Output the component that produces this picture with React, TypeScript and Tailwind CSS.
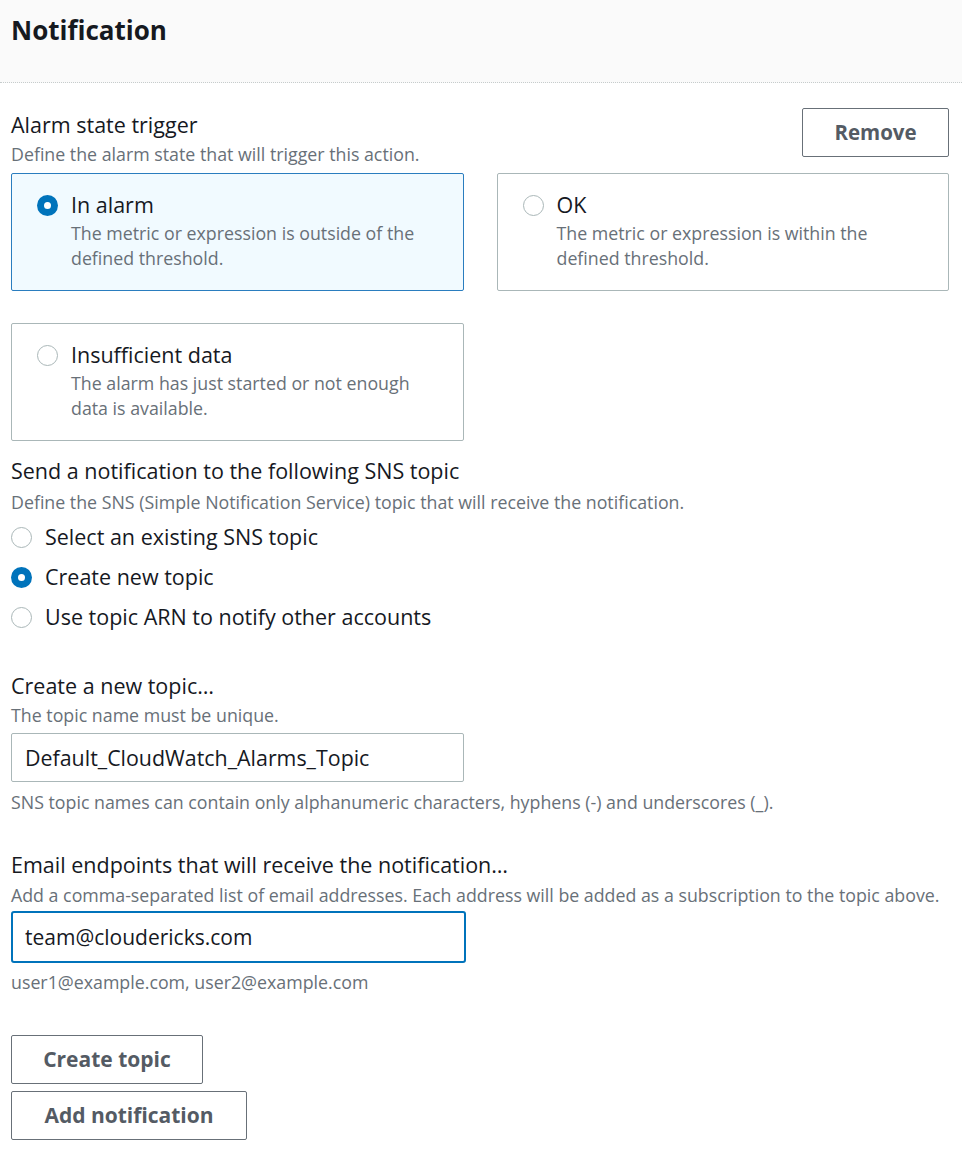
import React, { useState } from 'react';

function Radio({ checked }: { checked: boolean }) {
  return checked ? (
    <span className="flex h-[21px] w-[21px] shrink-0 items-center justify-center rounded-full bg-[#0073bb]">
      <span className="h-[7px] w-[7px] rounded-full bg-white" />
    </span>
  ) : (
    <span className="h-[21px] w-[21px] shrink-0 rounded-full border-[1.5px] border-[#aab7b8] bg-white" />
  );
}

function Tile({
  title,
  description,
  checked,
  onClick,
}: {
  title: string;
  description: string;
  checked: boolean;
  onClick: () => void;
}) {
  return (
    <div
      onClick={onClick}
      className={`h-[118px] cursor-pointer rounded-[2px] border pl-[25px] pr-[24px] pt-[19px] ${
        checked ? 'border-[#2a7dbf] bg-[#f1faff]' : 'border-[#aab7b8] bg-white'
      }`}
    >
      <div className="flex items-center gap-[13px]">
        <Radio checked={checked} />
        <span className="text-[21.5px] leading-[24px] text-[#16191f]">{title}</span>
      </div>
      <p className="mt-[4px] pl-[34px] text-[17.8px] leading-[25px] text-[#687078]">{description}</p>
    </div>
  );
}

export default function App() {
  const [state, setState] = useState('alarm');
  const [topicMode, setTopicMode] = useState('create');
  const [topicName, setTopicName] = useState('Default_CloudWatch_Alarms_Topic');
  const [emails, setEmails] = useState('team@cloudericks.com');

  const topicOptions = [
    { id: 'existing', label: 'Select an existing SNS topic' },
    { id: 'create', label: 'Create new topic' },
    { id: 'arn', label: 'Use topic ARN to notify other accounts' },
  ];

  return (
    <div className="min-h-[1152px] bg-white font-['Open_Sans',sans-serif] text-[#16191f]">
      <div className="h-[83px] border-b border-dotted border-[#c6cccc] bg-[#fafafa] px-[11px] pt-[12px]">
        <h1 className="text-[26px] font-bold leading-[36px]">Notification</h1>
      </div>

      <div className="pl-[11px] pr-[13px]">
        <div className="flex items-start justify-between pt-[25px]">
          <div className="pt-[4px]">
            <div className="text-[21.5px] leading-[26px]">Alarm state trigger</div>
            <div className="mt-[5px] text-[17.8px] leading-[22px] text-[#687078]">
              Define the alarm state that will trigger this action.
            </div>
          </div>
          <button className="h-[49px] w-[147px] rounded-[2px] border border-[#687078] bg-white text-[20.5px] font-bold text-[#545b64]">
            Remove
          </button>
        </div>

        <div className="mt-[8px] grid grid-cols-2 gap-x-[33px] gap-y-[32px]">
          <Tile
            title="In alarm"
            description="The metric or expression is outside of the defined threshold."
            checked={state === 'alarm'}
            onClick={() => setState('alarm')}
          />
          <Tile
            title="OK"
            description="The metric or expression is within the defined threshold."
            checked={state === 'ok'}
            onClick={() => setState('ok')}
          />
          <Tile
            title="Insufficient data"
            description="The alarm has just started or not enough data is available."
            checked={state === 'insufficient'}
            onClick={() => setState('insufficient')}
          />
        </div>

        <div className="mt-[17px] text-[21.5px] leading-[26px]">Send a notification to the following SNS topic</div>
        <div className="mt-[7px] text-[17.8px] leading-[22px] text-[#687078]">
          Define the SNS (Simple Notification Service) topic that will receive the notification.
        </div>
        <div className="mt-[11px] flex flex-col gap-[14px]">
          {topicOptions.map((o) => (
            <label key={o.id} className="flex cursor-pointer items-center gap-[13px]" onClick={() => setTopicMode(o.id)}>
              <Radio checked={topicMode === o.id} />
              <span className="text-[21.5px] leading-[26px]">{o.label}</span>
            </label>
          ))}
        </div>

        <div className="mt-[43px] text-[21.5px] leading-[26px]">Create a new topic…</div>
        <div className="mt-[5px] text-[17.8px] leading-[22px] text-[#687078]">The topic name must be unique.</div>
        <input
          value={topicName}
          onChange={(e) => setTopicName(e.target.value)}
          className="mt-[7px] h-[49px] w-[453px] rounded-[2px] border border-[#aab7b8] px-[13px] text-[21.4px] text-[#16191f] outline-none"
        />
        <div className="mt-[9px] text-[17.8px] leading-[22px] text-[#687078]">
          SNS topic names can contain only alphanumeric characters, hyphens (-) and underscores (_).
        </div>

        <div className="mt-[39px] text-[21.5px] leading-[26px]">Email endpoints that will receive the notification…</div>
        <div className="mt-[6px] text-[17.8px] leading-[22px] text-[#687078]">
          Add a comma-separated list of email addresses. Each address will be added as a subscription to the topic above.
        </div>
        <input
          value={emails}
          onChange={(e) => setEmails(e.target.value)}
          className="mt-[5px] h-[52px] w-[455px] rounded-[3px] border-2 border-[#0073bb] px-[12px] text-[21px] text-[#16191f] outline-none"
        />
        <div className="mt-[8px] text-[17.8px] leading-[22px] text-[#687078]">user1@example.com, user2@example.com</div>

        <div className="mt-[42px] flex flex-col items-start gap-[7px]">
          <button className="h-[49px] w-[192px] rounded-[2px] border border-[#687078] bg-white text-[21px] font-bold text-[#545b64]">
            Create topic
          </button>
          <button className="h-[49px] w-[236px] rounded-[2px] border border-[#687078] bg-white text-[21px] font-bold text-[#545b64]">
            Add notification
          </button>
        </div>
      </div>
    </div>
  );
}
